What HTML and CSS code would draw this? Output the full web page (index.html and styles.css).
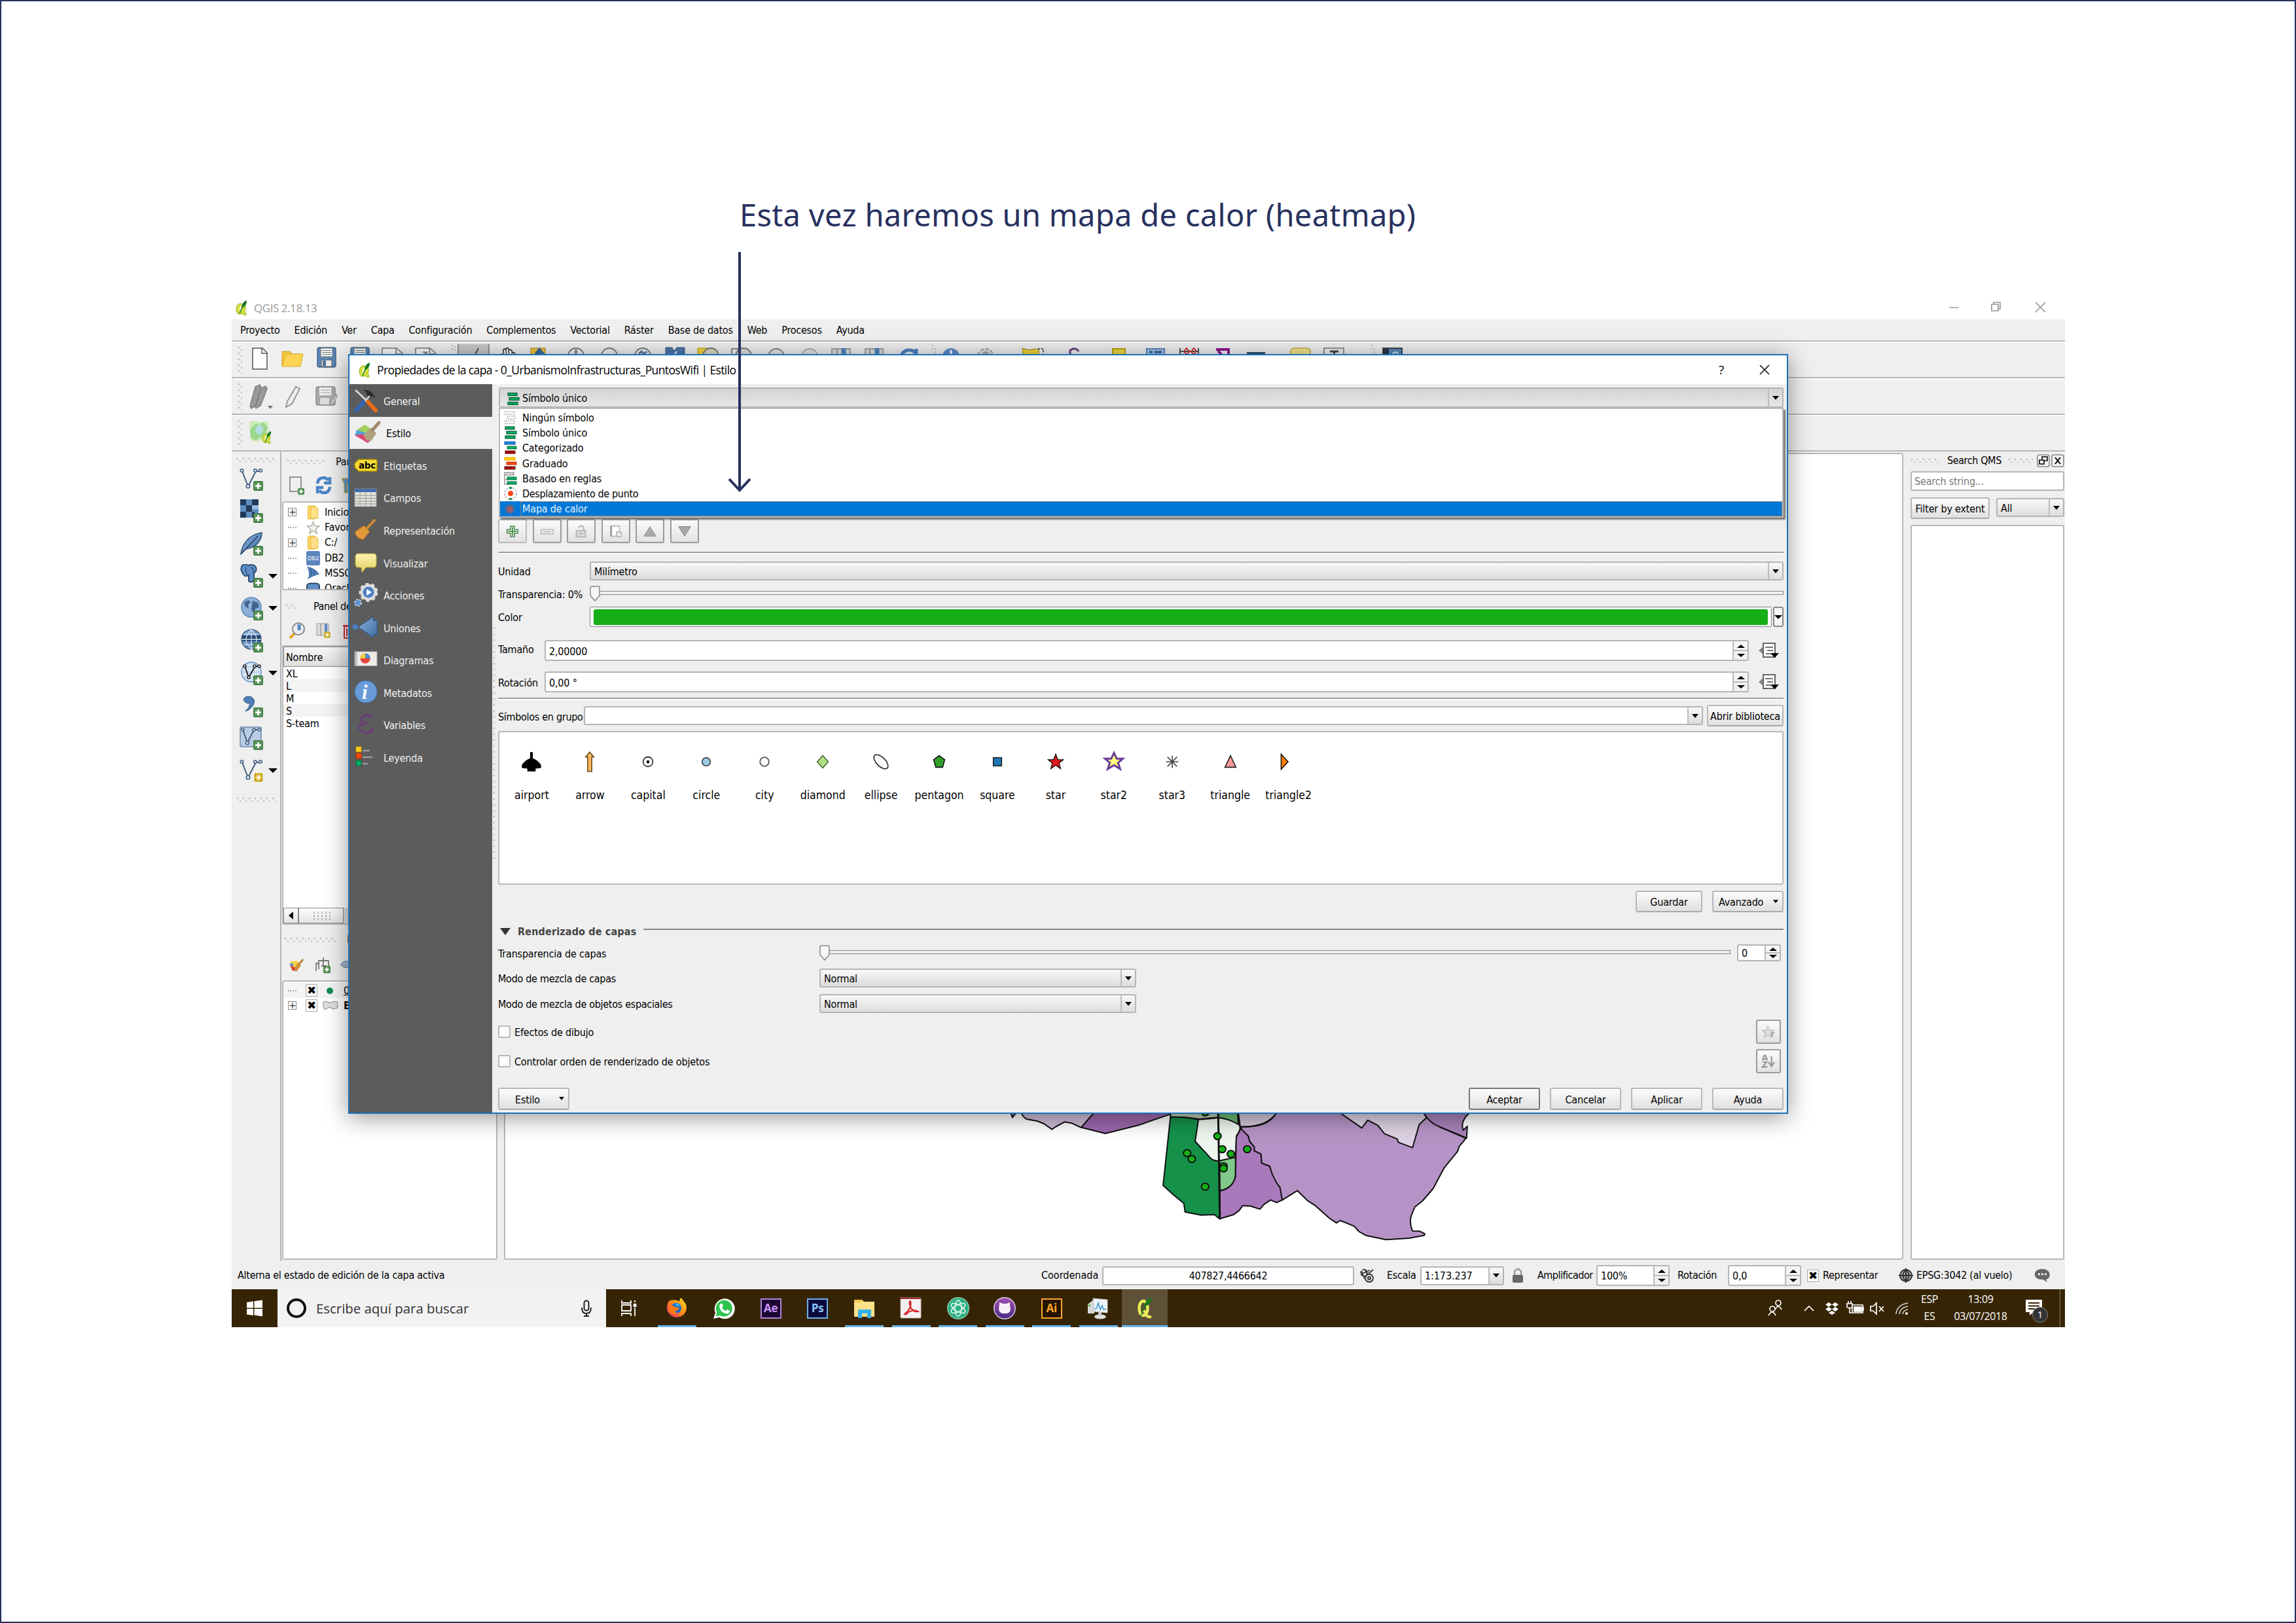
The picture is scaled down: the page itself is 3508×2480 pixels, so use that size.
FILE: index.html
```html
<!DOCTYPE html>
<html lang="es">
<head>
<meta charset="utf-8">
<title>Mapa de calor en QGIS</title>
<link rel="stylesheet" href="styles.css">
</head>
<body>
<svg class="defs" aria-hidden="true">
  <defs>
    <linearGradient id="blueG" x1="0" y1="0" x2="1" y2="1"><stop offset="0" stop-color="#8fb4dd"/><stop offset="1" stop-color="#3b68a0"/></linearGradient>
    <linearGradient id="yel" x1="0" y1="0" x2="0" y2="1"><stop offset="0" stop-color="#fff3b0"/><stop offset="1" stop-color="#e0cf60"/></linearGradient>
    <linearGradient id="ff" x1="1" y1="0" x2="0" y2="1"><stop offset="0" stop-color="#ffe226"/><stop offset=".5" stop-color="#ff8a16"/><stop offset="1" stop-color="#e31587"/></linearGradient>
    <linearGradient id="gh" x1="0" y1="0" x2="0" y2="1"><stop offset="0" stop-color="#a24fae"/><stop offset="1" stop-color="#4a2c86"/></linearGradient>
    <radialGradient id="heat"><stop offset="0" stop-color="#d8543a"/><stop offset="1" stop-color="#d8543a" stop-opacity="0"/></radialGradient>
    <symbol id="plus" viewBox="0 0 12 12"><rect x=".5" y=".5" width="11" height="11" rx="1.5" fill="#5a9458" stroke="#3d7a42"/><path d="M6 2.5v7M2.500 6h7" stroke="#fff" stroke-width="2.200"/></symbol>
    <symbol id="newbadge" viewBox="0 0 12 12"><rect x=".5" y=".5" width="11" height="11" rx="1.500" fill="#c9a20c"/><path d="M6 2v8M2 6h8M3.200 3.200l5.600 5.600M8.800 3.200L3.200 8.800" stroke="#fff6c8" stroke-width="1.300"/></symbol>
    <symbol id="vee" viewBox="0 0 36 36"><path d="M4 6l9 23L25 6h6" fill="none" stroke="#44607f" stroke-width="2"/><g fill="#dfe8f3" stroke="#44607f" stroke-width="1.500"><circle cx="3.500" cy="5" r="2.300"/><circle cx="13" cy="29" r="2.800"/><circle cx="24" cy="5" r="2.300"/><circle cx="32" cy="5" r="2.300"/></g></symbol>
    <symbol id="globe" viewBox="0 0 36 36"><circle cx="18" cy="16" r="15" fill="url(#blueG)" stroke="#44607f" stroke-width="1.500"/></symbol>
    <symbol id="qgis" viewBox="0 0 20 26"><path d="M8 6C3 7 1 12 2 18c1 5 5 6 9 4l4 3 3-2-3-4c2-4 2-9 0-11z" fill="#d3df3c" stroke="#8fae2a"/><path d="M9 9c-3 2-3 8-1 10 3-1 4-7 1-10z" fill="#f6f8d0"/><path d="M10 13c0-6 4-11 8-12 1 6-3 11-8 12z" fill="#197a22"/><path d="M12 10l-5 12" stroke="#197a22" stroke-width="1.500"/></symbol>
    <symbol id="folder" viewBox="0 0 20 24"><path d="M3 1h10v22H1V3z" fill="#ffd766" stroke="#e3b334"/><path d="M6 3h9l3 2v17H6z" fill="#ffe08a" stroke="#e3b334"/></symbol>
    <symbol id="disk" viewBox="0 0 30 32"><rect x="1" y="1" width="28" height="30" rx="3" fill="#5b86b8" stroke="#44658c" stroke-width="1.500"/><rect x="6" y="2" width="18" height="13" fill="#f4f4f4" stroke="#777"/><path d="M8 5.500h14M8 8.500h14M8 11.500h14" stroke="#777"/><rect x="7" y="20" width="16" height="10" fill="#eee" stroke="#555"/><rect x="9" y="21" width="5" height="8" fill="#4a6f9c"/></symbol>
    <symbol id="one" viewBox="0 0 20 20"><g fill="#00b060" stroke="#0a5a34" stroke-width="1.200"><rect x="2" y="1" width="14" height="4"/><rect x="4" y="8" width="15" height="4"/><rect x="2" y="15" width="15" height="4"/></g></symbol>
    <symbol id="override" viewBox="0 0 34 26"><path d="M10 6v14L2 13z" fill="#888"/><rect x="9" y="2" width="18" height="21" fill="#fff" stroke="#666" stroke-width="2"/><path d="M12 8h12M15 13h9M13 18h8" stroke="#777" stroke-width="1.800"/><path d="M20 17h13l-6.500 7z" fill="#000"/></symbol>
  </defs>
</svg>

<main class="page">
  <h1 class="caption">Esta vez haremos un mapa de calor (heatmap)</h1>

  <div class="screen">
    <header class="titlebar">
      <svg class="app-icon" viewBox="0 0 20 26"><use href="#qgis"/></svg>
      <span class="title muted">QGIS 2.18.13</span>
      <svg class="win-buttons" viewBox="0 0 190 30" fill="none" stroke="#999" stroke-width="1.700"><path d="M0 14h14M65 9h10v10H65zM68 9V6h10v10h-3M132 6l15 15M147 6l-15 15"/></svg>
    </header>
    <nav class="menu">
      <span>Proyecto</span><span>Edición</span><span>Ver</span><span>Capa</span><span>Configuración</span><span>Complementos</span><span>Vectorial</span><span>Ráster</span><span>Base de datos</span><span>Web</span><span>Procesos</span><span>Ayuda</span>
    </nav>

    <div class="toolbar tb1">
      <span class="grip vert"></span>
      <svg width="1780" height="48" viewBox="378 526 1780 48" fill="none">
        <path d="M386 532h15l7 7v25h-22z" fill="#fff" stroke="#555" stroke-width="1.500"/><path d="M400 532v8h8" stroke="#555" stroke-width="1.500"/>
        <path d="M431 559v-22h12l3 4h14v6z" fill="#f5c53a" stroke="#cf9c20"/><path d="M437 541h26l-4 19h-28z" fill="#ffd452" stroke="#d9a829"/>
        <use href="#disk" x="484" y="530" width="30" height="32"/><use href="#disk" x="535" y="530" width="30" height="32"/>
        <path d="M584 560v-28h22l9 8v20zM605 532v9h9M635 560v-28h22l9 8v20zM656 532v9h9M644 545l8-7m0 6v-6h-6" fill="#fbfbfb" stroke="#777" stroke-width="1.500"/>
        <path d="M691 527v10M695 529v10" stroke="#bbb" stroke-width="2" stroke-dasharray="2 3"/>
        <rect x="700" y="525" width="47" height="40" rx="3" fill="#c9c9c9" stroke="#909090" stroke-width="2"/><path d="M731 532l-5 10m-4 0h8" stroke="#555" stroke-width="2"/>
        <path d="M766 548l-1-6q2-3 5 2l-1-9q2-4 4 0v-2q2-3 4 0l1 2q2-2 4 1l1 3q3-1 4 2l4 9" fill="#fff" stroke="#444" stroke-width="1.800"/><path d="M773 534l1 10M777 534l1 10M782 537l1 8" stroke="#444" stroke-width="1.500"/>
        <rect x="811" y="532" width="22" height="20" fill="#f3c43a" stroke="#ac8610"/><path d="M824 552v-16m-6 6l6-8 7 8" stroke="#3568a4" stroke-width="4"/>
        <g stroke="#777" stroke-width="1.800" fill="#eee"><circle cx="880" cy="544" r="12"/><circle cx="931" cy="544" r="12"/><circle cx="982" cy="544" r="12"/></g><path d="M880 534v12M976 541l4-4 4 4 4-4" stroke="#54779e" stroke-width="3"/>
        <path d="M1017 531h10l3 6 4-6h12v20h-29z" fill="#4b77aa" stroke="#34587f"/><path d="M1028 545l6-8" stroke="#fff" stroke-width="2"/>
        <rect x="1066" y="532" width="22" height="20" fill="#efd63a" stroke="#b89b12"/><circle cx="1086" cy="544" r="12" fill="#ddd9c5" stroke="#777" stroke-width="1.800"/>
        <path d="M1118 550v-17h12" stroke="#888" stroke-width="2"/><circle cx="1136" cy="544" r="12" fill="#ddd" stroke="#777" stroke-width="1.800"/>
        <circle cx="1186" cy="545" r="12" fill="#e5e5e5" stroke="#888" stroke-width="1.800"/><circle cx="1237" cy="545" r="12" fill="#e5e5e5" stroke="#aaa" stroke-width="1.800"/>
        <path d="M1271 550v-17h28v17M1322 550v-17h27v17" fill="#ddd" stroke="#8a8a8a" stroke-width="1.500"/><path d="M1279 533v17M1329 533v17" stroke="#999" stroke-width="2"/><path d="M1289 532v18M1340 532v18" stroke="#4f83bf" stroke-width="7"/>
        <path d="M1376 546q4-12 14-11 6 0 8 5m2-7v12h-11" stroke="#4f83bf" stroke-width="5"/>
        <path d="M1425 527v10M1429 532v8" stroke="#bbb" stroke-width="2" stroke-dasharray="2 3"/>
        <circle cx="1453" cy="545" r="13" fill="#5b8cc4"/><path d="M1453 535v8" stroke="#fff" stroke-width="3"/>
        <circle cx="1506" cy="545" r="12" fill="#ddd" stroke="#999" stroke-width="2" stroke-dasharray="5 3"/><circle cx="1506" cy="543" r="6" fill="#aaa"/>
        <path d="M1562 532l10 3 8-2 7 1v16h-23z" fill="#efd63a" stroke="#8f7a12"/><path d="M1586 533h8v12" stroke="#555" stroke-width="1.800" stroke-dasharray="3 2"/>
        <path d="M1648 537q-3-5-9-4-7 3-3 9" stroke="#6a437c" stroke-width="3"/>
        <rect x="1700" y="533" width="19" height="20" fill="#ecd93c" stroke="#bda30a" stroke-width="2"/>
        <rect x="1752" y="533" width="27" height="20" fill="#a8c8ea" stroke="#5585bb" stroke-width="2"/><path d="M1756 538h5m3 0h11" stroke="#44709f" stroke-width="4"/>
        <path d="M1803 532v16m28-16v16M1803 537h28" stroke="#555" stroke-width="2"/><path d="M1813 532l4 5-4 5-4-5zM1824 532l4 5-4 5-4-5z" stroke="#cf2d2d" stroke-width="2"/>
        <path d="M1858 534h19v8M1861 536l8 9" stroke="#8d1591" stroke-width="4"/><rect x="1905" y="538" width="28" height="9" fill="#2f4d71"/>
        <rect x="1972" y="532" width="30" height="22" rx="5" fill="#f4e48c" stroke="#c4a93c" stroke-width="1.500"/>
        <rect x="2023" y="532" width="30" height="22" fill="#eee" stroke="#777" stroke-width="1.500"/><path d="M2032 537h13m-6.500 0v12" stroke="#444" stroke-width="3"/>
        <path d="M2096 527v10M2100 532v8" stroke="#bbb" stroke-width="2" stroke-dasharray="2 3"/>
        <rect x="2113" y="532" width="29" height="22" fill="#5b86b8" stroke="#222" stroke-width="1.500"/><rect x="2113" y="532" width="9" height="22" fill="#26374c"/><circle cx="2132" cy="542" r="4" stroke="#dde8f5" stroke-width="2"/>
      </svg>
    </div>
    <div class="toolbar tb2">
      <span class="grip vert"></span>
      <svg width="160" height="48" viewBox="378 581 160 48" fill="none">
        <path d="M382 620l8-30 7-3 2 4-8 28-7 4zM390 620l8-27 8-4 2 4-10 26-7 4z" fill="#999" stroke="#808080" stroke-width="1.500"/><path d="M409 619h8l-4 5z" fill="#777"/>
        <path d="M437 621l2-9 13-22 6 3-12 23z" fill="#eee" stroke="#909090" stroke-width="1.800"/>
        <rect x="483" y="590" width="29" height="28" rx="3" fill="#a9a9a9" stroke="#8b8b8b" stroke-width="1.500"/><rect x="488" y="591" width="18" height="12" fill="#eee"/><path d="M490 595h14M490 599h14" stroke="#999"/><rect x="489" y="607" width="14" height="10" fill="#ddd"/><path d="M503 619l4-8 7-10 2 2-6 12z" fill="#ccc" stroke="#888"/>
      </svg>
    </div>
    <div class="toolbar tb3">
      <span class="grip vert"></span>
      <svg width="40" height="40" viewBox="0 0 40 40"><path d="M2 3l9-2 9 3 10-3 3 32-10-3-11 3-8-3z" fill="#c9ecb4"/><path d="M3 14l9-9 5 3 5-6 8 9-3 7 4 9-10-2-9 6-8-4z" fill="#9bd88c"/><path d="M12 10l8-3 4 8-6 8-7-5z" fill="#b4dfe0"/><use href="#qgis" x="20" y="16" width="17" height="21"/></svg>
    </div>

    <section class="work">
      <aside class="side-tools">
        <span class="grip wide"></span>
        <div class="tool"><svg viewBox="0 0 36 36"><use href="#vee"/><use href="#plus" x="21" y="21" width="15" height="15"/></svg></div>
        <div class="tool"><svg viewBox="0 0 36 36"><rect x="1" width="28" height="28" fill="#5f8dc0"/><path d="M1 0h9v9H1zM19 0h10v9H19zM10 9h9v10h-9zM1 19h9v9H1zM19 19h4v9h-4z" fill="#22395a"/><path d="M19 9h10v6H19z" fill="#9cbbe0"/><use href="#plus" x="21" y="21" width="15" height="15"/></svg></div>
        <div class="tool"><svg viewBox="0 0 36 36"><path d="M2 33C4 18 14 4 34 1c0 12-8 22-24 25z" fill="url(#blueG)" stroke="#36557d" stroke-width="1.500"/><path d="M2 34L28 6" stroke="#24406a" stroke-width="1.500"/><use href="#plus" x="21" y="21" width="15" height="15"/></svg></div>
        <div class="tool"><svg viewBox="0 0 36 36"><path d="M4 2q5-3 9 0 9-3 12 3 2 5-3 9v10q-3 6-8 2v-9q-5 3-8-1-6-8-2-14z" fill="#5f8fc6" stroke="#2d4c75" stroke-width="2"/><path d="M10 5q-2 8 3 11M17 5q6 2 4 10" stroke="#2d4c75" stroke-width="1.500" fill="none"/><use href="#plus" x="21" y="21" width="15" height="15"/></svg><i class="caret"></i></div>
        <div class="tool"><svg viewBox="0 0 36 36"><circle cx="18" cy="16" r="15" fill="#8bafd8" stroke="#5e83b0" stroke-width="1.500"/><path d="M7 9l6-4 4 3-4 4 1 6-5-3zM20 6l8 3 2 7-6 2-2 7-4-6 1-6z" fill="#3d638f"/><use href="#plus" x="21" y="21" width="15" height="15"/></svg><i class="caret"></i></div>
        <div class="tool"><svg viewBox="0 0 36 36"><use href="#globe"/><path d="M4 10h28v9H4z" fill="#24466f"/><path d="M3 16h30M6 8h24M6 24h24M18 1v30M18 1q-16 15 0 30 16-15 0-30" fill="none" stroke="#cfdff0" stroke-width="1.300"/><use href="#plus" x="21" y="21" width="15" height="15"/></svg></div>
        <div class="tool"><svg viewBox="0 0 36 36"><circle cx="18" cy="16" r="15" fill="#d5e4f4" stroke="#7aa0cc" stroke-width="1.800"/><path d="M3 16h30M6 8h24M6 24h24" stroke="#9cbbdd"/><path d="M8 7l6 17L24 7h6" fill="none" stroke="#222" stroke-width="2"/><g fill="#fff" stroke="#222" stroke-width="1.500"><circle cx="8" cy="7" r="2"/><circle cx="14" cy="24" r="2"/><circle cx="23" cy="7" r="2"/><circle cx="30" cy="7" r="2"/></g><use href="#plus" x="21" y="21" width="15" height="15"/></svg><i class="caret"></i></div>
        <div class="tool"><svg viewBox="0 0 36 36"><path d="M6 8q4-6 12-3 8 5 2 14-4 6-11 8 6-6 7-12-9 0-10-7z" fill="#4e7fb6" stroke="#34587f"/><use href="#plus" x="21" y="21" width="15" height="15"/></svg></div>
        <div class="tool"><svg viewBox="0 0 36 36"><rect x="1" y="1" width="32" height="30" rx="2" fill="#b9cce4" stroke="#6d8cb0" stroke-width="1.500"/><path d="M5 5l7 20L22 5h8" fill="none" stroke="#44607f" stroke-width="2"/><g fill="#dfe8f3" stroke="#44607f" stroke-width="1.500"><circle cx="5" cy="5" r="2"/><circle cx="12" cy="25" r="2.500"/><circle cx="22" cy="5" r="2"/><circle cx="30" cy="5" r="2"/></g><use href="#plus" x="21" y="21" width="15" height="15"/></svg></div>
        <div class="tool"><svg viewBox="0 0 36 36"><use href="#vee"/><use href="#newbadge" x="22" y="22" width="14" height="14"/></svg><i class="caret"></i></div>
        <span class="grip wide low"></span>
      </aside>

      <aside class="left-docks">
        <div class="dock-head"><span class="grip d1"></span><span>Panel</span></div>
        <svg class="dock-tools" viewBox="0 0 102 36" fill="none"><path d="M12 4h17v22H12z" stroke="#777" stroke-width="1.500"/><use href="#plus" x="24" y="20" width="10" height="12"/><path d="M54 14q1-9 9-9 5 0 7 4M73 4v9h-9M73 19q-1 9-9 9-5 0-7-4M54 29v-9h9" stroke="#4a84c5" stroke-width="4.500"/><path d="M91 6h14l-5 8v14h-5V14z" fill="#6c98c9" stroke="#caa51c"/></svg>
        <div class="box tree">
          <div class="node"><i class="exp">+</i><svg class="ni" viewBox="0 0 20 24"><use href="#folder"/></svg><span>Inicio</span></div>
          <div class="node"><i class="dash"></i><svg class="ni" viewBox="0 0 22 22"><path d="M11 2l2.500 6.500 7 .5-5.500 4.500 2 7L11 16l-6 4.500 2-7L1.500 9l7-.5z" fill="#f3f3ee" stroke="#a5a596" stroke-width="1.300"/></svg><span>Favoritos</span></div>
          <div class="node"><i class="exp">+</i><svg class="ni" viewBox="0 0 20 24"><use href="#folder"/></svg><span>C:/</span></div>
          <div class="node"><i class="dash"></i><b class="ni db2">DB2</b><span>DB2</span></div>
          <div class="node"><i class="dash"></i><svg class="ni" viewBox="0 0 22 22"><path d="M1 0q15 3 20 13-8 0-19 8Q7 12 1 0z" fill="#4d7fb7"/><path d="M7 3l2 13M12 6l2 9" stroke="#2e5280"/></svg><span>MSSQL</span></div>
          <div class="node"><i class="dash"></i><svg class="ni" viewBox="0 0 22 22"><rect x="1" y="3" width="20" height="18" rx="5" fill="#5e8fc6" stroke="#243f63" stroke-width="2"/></svg><span>Oracle</span></div>
        </div>
        <div class="dock-head h2"><span class="grip d2"></span><span>Panel de</span></div>
        <svg class="dock-tools t2" viewBox="0 0 102 36" fill="none"><path d="M12 28l8-8" stroke="#e0a52c" stroke-width="4"/><circle cx="25" cy="14" r="9" fill="#e9eef5" stroke="#888" stroke-width="2"/><path d="M26 7v9" stroke="#5b8cc4" stroke-width="5"/><path d="M53 6h18v18H53z" fill="#ddd" stroke="#999"/><path d="M59 6v18" stroke="#999" stroke-width="1.500"/><path d="M67 6v12" stroke="#5b8cc4" stroke-width="4"/><use href="#newbadge" x="64" y="17" width="10" height="12"/><path d="M95 10h12v18H95zM93 9h16M99 13v12" stroke="#cf2e3a" stroke-width="2"/></svg>
        <div class="box marks">
          <div class="th">Nombre</div>
          <div class="tr">XL</div><div class="tr alt">L</div><div class="tr">M</div><div class="tr alt">S</div><div class="tr">S-team</div>
          <div class="hscroll"><span class="sb-left"></span><span class="sb-thumb"><i class="dots"></i></span></div>
        </div>
        <div class="dock-head h3"><span class="grip d3"></span><span>P</span></div>
        <svg class="dock-tools t3" viewBox="0 0 102 36" fill="none"><path d="M12 19l10 3 1 6-7-1z" fill="#d5382f"/><path d="M12 13l12-1 3 8-10 2z" fill="#f6d24a"/><path d="M12 16l6 1-1 3-5-1z" fill="#4a8fd6"/><path d="M19 23l5-8 5 4-5 7-5 1z" fill="#cf9336"/><path d="M26 17l6-7" stroke="#b88039" stroke-width="3"/><path d="M52 28v-12h4M56 25v-13h15v13M60 20h7v6M63 7v14" stroke="#777" stroke-width="1.800"/><use href="#plus" x="63" y="20" width="11" height="11"/><path d="M89 18q8-11 18 0-9 10-18 0z" fill="#9fb7d0" stroke="#6d7f92"/></svg>
        <div class="box layers">
          <div class="lrow alt"><i class="dash"></i><b class="chk">✖</b><i class="dot"></i><span class="current">0_</span></div>
          <div class="lrow"><i class="exp">+</i><b class="chk">✖</b><svg class="poly" viewBox="0 0 24 16"><path d="M1 2q5-2 10 1 6-3 12-1v9l-6 2-7-3-7 4q-3-6-2-12z" fill="#ddd" stroke="#8d8d8d"/></svg><span>B</span></div>
        </div>
      </aside>

      <div class="canvas">
        <svg class="map" viewBox="0 60 1568 600" preserveAspectRatio="none" stroke="#111" stroke-width="2" stroke-linejoin="round">
          <path vector-effect="non-scaling-stroke" d="M86 55l6 25 12-25z" fill="#a072b0"/>
          <path vector-effect="non-scaling-stroke" d="M118 55Q123 80 136 88L166 96 186 108 210 134 224 120 248 100 270 106 298 126 338 55z" fill="#cdbad6"/>
          <path vector-effect="non-scaling-stroke" d="M338 55L298 125 370 153 470 115 510 93 566 64V55z" fill="#9c68ad"/>
          <path vector-effect="non-scaling-stroke" d="M884 55Q870 95 840 111 810 125 774 123L782 145 798 165 802 189 816 215V233L836 247 838 289 862 303 870 353 878 393 888 417 900 458 945 415 975 460 1000 485 1040 540 1062 563 1074 552 1115 578 1130 603 1150 620 1210 640 1280 633 1325 620 1327 613 1312 601 1290 600Q1280 560 1286 530L1297 490 1320 462 1352 405 1385 310 1425 235 1430 212 1450 175 1372 123 1322 55z" fill="#b693c6"/>
          <path vector-effect="non-scaling-stroke" d="M768 55L774 121Q815 125 846 105 872 85 884 55z" fill="#d3c6da"/>
          <path vector-effect="non-scaling-stroke" d="M1070 55L1138 128 1156 92 1186 116 1206 154 1244 178 1248 194 1290 218 1310 112 1332 80 1322 55z" fill="#ddd2e3"/>
          <path vector-effect="non-scaling-stroke" d="M1322 55Q1340 105 1372 123L1452 174 1454 120 1442 138Q1432 100 1458 62V55z" fill="#a982b9"/>
          <path vector-effect="non-scaling-stroke" d="M565 55v22q50 0 86 10l60-8 60 35-6-59z" fill="#b6cbb2"/>
          <path vector-effect="non-scaling-stroke" d="M708 55v26q34 8 60 32l-2-58z" fill="#6cb876"/>
          <path vector-effect="non-scaling-stroke" d="M565 77Q615 77 649 89 645 149 639 189L689 269 713 279V545L697 525 657 527 609 513 605 473 573 433 543 391z" fill="#15914a"/>
          <path vector-effect="non-scaling-stroke" d="M649 89q50-4 60-9 34 6 62 34 8 16-8 50l-3 100-48 15q-14 2-25-10l-48-80z" fill="#edf5ee"/>
          <path vector-effect="non-scaling-stroke" d="M712 278l48-16v82q-5 60-47 71z" fill="#80c98a"/>
          <path vector-effect="non-scaling-stroke" d="M776 130L762 170 760 350Q752 404 713 416V544L753 526 771 506 781 484 805 486 833 500 847 476 865 458 883 470 900 458 893 400 883 380 870 340 862 303 838 289 836 247 816 233V215L802 189 798 165z" fill="#aa79bb"/>
          <path vector-effect="non-scaling-stroke" d="M708 55l5 489" fill="none" stroke-width="3"/>
          <g fill="#12b016"><ellipse vector-effect="non-scaling-stroke" cx="706" cy="165" rx="11" ry="16"/><ellipse vector-effect="non-scaling-stroke" cx="720" cy="225" rx="11" ry="16"/><ellipse vector-effect="non-scaling-stroke" cx="746" cy="247" rx="11" ry="16"/><ellipse vector-effect="non-scaling-stroke" cx="795" cy="225" rx="11" ry="16"/><ellipse vector-effect="non-scaling-stroke" cx="615" cy="243" rx="11" ry="16"/><ellipse vector-effect="non-scaling-stroke" cx="629" cy="270" rx="11" ry="16"/><ellipse vector-effect="non-scaling-stroke" cx="724" cy="303" rx="11" ry="16"/><ellipse vector-effect="non-scaling-stroke" cx="724" cy="313" rx="11" ry="16"/><ellipse vector-effect="non-scaling-stroke" cx="669" cy="397" rx="11" ry="16"/><ellipse vector-effect="non-scaling-stroke" cx="669" cy="58" rx="11" ry="14"/></g>
        </svg>
      </div>

      <aside class="qms">
        <div class="qms-head"><span class="grip q1"></span><span>Search QMS</span><span class="grip q2"></span><svg class="qbtn" viewBox="0 0 20 20" fill="none" stroke="#000" stroke-width="1.600"><rect x="1" y="1" width="18" height="18" rx="3" stroke="#888" fill="#f6f6f6"/><path d="M4 9h7v6H4zM8 8V4h8v6h-4"/></svg><svg class="qbtn" viewBox="0 0 20 20" fill="none" stroke="#000" stroke-width="2"><rect x="1" y="1" width="18" height="18" rx="3" stroke="#888" stroke-width="1.600" fill="#f6f6f6"/><path d="M6 5l8 10M14 5L6 15"/></svg></div>
        <div class="field qsearch">Search string...</div>
        <div class="qrow"><span class="btn qfilter">Filter by extent</span><span class="combo qall">All<i class="drop"></i></span></div>
        <div class="box qlist"></div>
      </aside>
    </section>

    <footer class="status">
      <span class="s-msg">Alterna el estado de edición de la capa activa</span>
      <span class="s-coord">Coordenada</span><span class="field f-coord">407827,4466642</span>
      <svg class="s-mouse" viewBox="0 0 24 24" fill="none" stroke="#333" stroke-width="1.800"><path d="M3 5l5 12M8 2l6 12M2 10l14-6M14 9l7-6"/><circle cx="7" cy="8" r="5" stroke-dasharray="3 2"/><circle cx="15" cy="16" r="6" fill="#ddd"/><circle cx="15" cy="16" r="2"/></svg>
      <span class="s-esc">Escala</span><span class="combo white f-esc">1:173.237<i class="drop"></i></span>
      <svg class="s-lock" viewBox="0 0 18 24"><path d="M4 12V6q5-8 10 0v6" fill="none" stroke="#999" stroke-width="2.500"/><rect x="1" y="11" width="16" height="12" rx="2" fill="#666"/></svg>
      <span class="s-amp">Amplificador</span><span class="spin f-amp">100%<i class="ud"></i></span>
      <span class="s-rot">Rotación</span><span class="spin f-rot">0,0<i class="ud"></i></span>
      <b class="chk s-chk">✖</b><span class="s-rep">Representar</span>
      <svg class="s-globe" viewBox="0 0 24 24" fill="none" stroke="#333" stroke-width="2"><circle cx="12" cy="12" r="9" fill="#aaa"/><path d="M12 1v22M1 12h22M12 3q-9 9 0 18 9-9 0-18"/></svg>
      <span class="s-epsg">EPSG:3042 (al vuelo)</span>
      <svg class="s-bubble" viewBox="0 0 24 22"><path d="M12 1c15 0 14 15 6 16l2 4-7-4C-3 18-3 1 12 1z" fill="#666"/><path d="M6 9h3m2 0h3m2 0h3" stroke="#fff" stroke-width="2.500"/></svg>
    </footer>

    <footer class="taskbar">
      <div class="start"><svg width="26" height="26" viewBox="0 0 26 26" fill="#fff"><path d="M1 4l10-1.500v10H1zM12.500 2.300L25 .5v12H12.500zM1 14h10v10L1 22.500zM12.500 14H25v11.500l-12.500-2z"/></svg></div>
      <div class="search"><i class="cortana"></i><span>Escribe aquí para buscar</span><svg width="18" height="26" viewBox="0 0 18 26" fill="none" stroke="#222" stroke-width="2"><rect x="5.500" y="1.500" width="7" height="15" rx="3.500"/><path d="M2 12q0 9 7 9t7-9M9 21v4M5 25h8"/></svg></div>
      <div class="tv"><svg width="26" height="26" viewBox="0 0 26 26" fill="none" stroke="#fff" stroke-width="1.800"><path d="M3 1v4h14V1M3 8h14v9H3zM3 25v-4h14v4M23 1v3M23 12v13"/><path d="M21.500 7h3v3h-3z" fill="#fff"/></svg></div>
      <div class="task on"><svg viewBox="0 0 36 36"><path d="M18 6Q10 4 5 7q-5 8-2 16 5 9 14 9 13-1 15-14 0-6-4-10-2-3-4-6-3 2-3 6z" fill="url(#ff)"/><circle cx="16" cy="18" r="8" fill="#1b6bd0"/><path d="M5 14q6-2 9 2l7 1q-1 5-6 5-1 4 5 3-10 6-16-3z" fill="#ff7a16"/><path d="M15 12l6 2" stroke="#2fb7f2" stroke-width="3"/></svg></div>
      <div class="task"><svg viewBox="0 0 36 36"><path d="M2 34l3-9A15.500 15.500 0 1 1 11 32z" fill="#fff"/><path d="M5.500 30.500l2-6A12.500 12.500 0 1 1 12 29z" fill="#2fc451"/><path d="M12 12q2-3 4 0l1 3-2 2q2 4 6 5l2-2 4 2q0 4-4 4.500-11-1-12-12z" fill="#fff"/></svg></div>
      <div class="task"><span class="adobe ae">Ae</span></div>
      <div class="task"><span class="adobe ps">Ps</span></div>
      <div class="task on"><svg viewBox="0 0 36 36"><path d="M2 5h12l3 3h16v23H2z" fill="#fde08a"/><path d="M2 5h12v4H2z" fill="#f2c94e"/><path d="M8 33V20h20v13h-6v-7h-8v7z" fill="#34b3ea"/></svg></div>
      <div class="task on"><svg viewBox="0 0 36 36"><rect x="2" y="2" width="31" height="31" rx="1" fill="#f3f1f1" stroke="#c9b3b3"/><path d="M2 4V2h31v2z" fill="#a32222"/><path d="M8 27q12-9 9-20-3 1 0 9 5 9 12 7-7-4-15 1-5 5-6 3z" fill="none" stroke="#d9242b" stroke-width="2"/></svg></div>
      <div class="task on"><svg viewBox="0 0 36 36"><circle cx="18" cy="18" r="17" fill="#8fc9ae"/><circle cx="18" cy="18" r="15.500" fill="#2bb183"/><g fill="none" stroke="#e6f7ef" stroke-width="1.500"><ellipse cx="18" cy="18" rx="5" ry="12"/><ellipse cx="18" cy="18" rx="5" ry="12" transform="rotate(60 18 18)"/><ellipse cx="18" cy="18" rx="5" ry="12" transform="rotate(-60 18 18)"/></g></svg></div>
      <div class="task on"><svg viewBox="0 0 36 36"><circle cx="18" cy="18" r="17" fill="#d9cbe2"/><circle cx="18" cy="18" r="15.500" fill="url(#gh)"/><path d="M10 12v-3l5 2h6l5-2v5q3 11-5 12h-6q-8-1-5-14z" fill="#f6f2f8"/></svg></div>
      <div class="task on"><span class="adobe ai">Ai</span></div>
      <div class="task on"><svg viewBox="0 0 36 36"><path d="M2 12l10-8v22H2z" fill="#d6d6d6"/><path d="M10 3l22 2v20l-20-2z" fill="#eef3f7" stroke="#b9c0c6"/><path d="M13 20l3-3 2-7 3 10 3-6 2 6 4-1" fill="none" stroke="#3a93d2" stroke-width="1.500"/><ellipse cx="21" cy="31" rx="9" ry="3.500" fill="#dedede"/><path d="M18 24h5v6h-5z" fill="#ccc"/><path d="M3 14h3" stroke="#52b83c" stroke-width="3"/></svg></div>
      <div class="task on active"><svg viewBox="0 0 36 36"><ellipse cx="16" cy="18" rx="6.500" ry="11" fill="none" stroke="#e8ee58" stroke-width="4.500"/><path d="M15 22q4 0 5 5t8 4" fill="none" stroke="#e8ee58" stroke-width="4"/><path d="M17 16Q18 5 28 2q1 10-11 14z" fill="#157a1c"/><path d="M19 13l-8 19" stroke="#157a1c" stroke-width="1.500"/></svg></div>
      <svg class="tray" viewBox="0 0 230 40" fill="none" stroke="#fff" stroke-width="1.700">
        <circle cx="17" cy="12" r="4"/><path d="M12 22q5-9 10 0"/><circle cx="8" cy="21" r="4"/><path d="M2 31q6-10 11 0"/>
        <path d="M57 24l7-7 7 7"/>
        <path d="M94 11l5 3.500-5 3.500-5-3.500zM104 11l5 3.500-5 3.500-5-3.500zM94 18l5 3.500-5 3.500-5-3.500zM104 18l5 3.500-5 3.500-5-3.500zM99 24l5 3-5 3-5-3z" fill="#fff" stroke="none"/>
        <path d="M130 15h16v12h-16zM147 18v6M122 13h8v5q-4 4-8 0zM124 13v-4M128 13v-4M126 20v7h4"/><path d="M133 18h11v7h-11z" fill="#fff"/>
        <path d="M158 17h4l5-5v17l-5-5h-4zM171 17l7 8M178 17l-7 8"/>
        <path d="M197 29q1-14 18-17M202 29q1-10 13-12M207 29q1-6 8-7" stroke="#ccc"/><circle cx="213" cy="28" r="2" fill="#fff" stroke="none"/>
      </svg>
      <div class="two lang"><span>ESP</span><span>ES</span></div>
      <div class="two clock"><span>13:09</span><span>03/07/2018</span></div>
      <div class="notif"><svg width="26" height="24" viewBox="0 0 26 24"><path d="M0 0h25v19H12l-6 5v-5H0z" fill="#fff"/><path d="M4 5h17M4 9.500h17M4 14h10" stroke="#362505" stroke-width="1.800"/></svg><b>1</b></div>
    </footer>

    <section class="dialog">
      <header class="dlg-title">
        <svg class="app-icon" viewBox="0 0 20 26"><use href="#qgis"/></svg>
        <span class="title">Propiedades de la capa - 0_UrbanismoInfrastructuras_PuntosWifi | Estilo</span>
        <span class="help">?</span>
        <svg class="close" viewBox="0 0 16 16" stroke="#111" stroke-width="1.600"><path d="M1 1l14 14M15 1L1 15"/></svg>
      </header>
      <div class="dlg-body">
        <nav class="tabs">
          <div class="tab"><svg viewBox="0 0 36 36"><path d="M2 2l18 17" stroke="#ddd" stroke-width="2.500"/><path d="M14 2q12-2 19 13l-5-4-4 5-4-6q0-5-6-8z" fill="#262b30"/><path d="M24 11L14 22" stroke="#ccc" stroke-width="3"/><path d="M14 21L3 33" stroke="#3567ad" stroke-width="7" stroke-linecap="round"/><path d="M21 20l12 13" stroke="#ee6d13" stroke-width="6" stroke-linecap="round"/></svg><span>General</span></div>
          <div class="tab sel"><svg viewBox="0 0 40 36"><path d="M4 14l12-8 10 6-6 8z" fill="#a6cf62"/><path d="M4 14l16 5-6 6-13-2z" fill="#4aa5dc"/><path d="M1 22l12-2 12 10-4 4z" fill="#d84a72"/><path d="M14 21l12-10 8 8-8 12-7-1z" fill="#b1a17f"/><path d="M28 14l10-11" stroke="#9d8c68" stroke-width="5" stroke-linecap="round"/></svg><span>Estilo</span></div>
          <div class="tab"><svg viewBox="0 0 36 36"><path d="M7 9h26q2 0 2 2v14q0 2-2 2H7l-6-6v-6z" fill="#f6dc31" stroke="#a98f0a" stroke-width="1.500"/><text x="7" y="23" font-size="14" font-weight="bold" font-family="DejaVu Sans Condensed, DejaVu Sans, sans-serif" textLength="26" lengthAdjust="spacingAndGlyphs">abc</text></svg><span>Etiquetas</span></div>
          <div class="tab"><svg viewBox="0 0 36 36"><rect x="1" y="5" width="33" height="27" fill="#e4e4df" stroke="#999"/><path d="M1 5h33v5H1z" fill="#3f70ad"/><path d="M1 15h33M1 19.500h33M1 24h33M1 28h33M9 10v22M18 10v22M26 10v22" stroke="#aaa89e" stroke-width="1.300"/></svg><span>Campos</span></div>
          <div class="tab"><svg viewBox="0 0 36 36"><path d="M2 20l13-9 9 9-10 13-8-3-5-7z" fill="#e09a3c" stroke="#9c6420"/><path d="M19 16L31 3" stroke="#cf8a36" stroke-width="4" stroke-linecap="round"/></svg><span>Representación</span></div>
          <div class="tab"><svg viewBox="0 0 36 36"><path d="M6 4h24q4 0 4 5v11q0 5-4 5H18l-6 8-1-8H6q-4 0-4-5V9q0-5 4-5z" fill="url(#yel)" stroke="#b9a536"/></svg><span>Visualizar</span></div>
          <div class="tab"><svg viewBox="0 0 36 36"><circle cx="22" cy="14" r="12.500" fill="#ddd" stroke="#ddd" stroke-width="4" stroke-dasharray="5 4"/><circle cx="22" cy="14" r="8.500" fill="#4a80c0"/><path d="M19 9l8 5-8 5z" fill="#fff"/><circle cx="6" cy="30" r="5" fill="#5a93d2" stroke="#ccc" stroke-width="2" stroke-dasharray="3 2"/></svg><span>Acciones</span></div>
          <div class="tab"><svg class="uni" viewBox="0 0 42 36"><circle cx="5" cy="17" r="4.500" fill="#4a7fc0"/><path d="M10 17L34 1v6h6v22h-6v5z" fill="url(#blueG)" stroke="#2c568c"/></svg><span>Uniones</span></div>
          <div class="tab"><svg viewBox="0 0 38 36"><rect x="1" y="5" width="36" height="23" fill="#ecebe6" stroke="#999"/><path d="M1 5h4v23H1z" fill="#bbb"/><circle cx="18" cy="16" r="8" fill="#e4433a"/><path d="M18 16V8q8 0 8 8z" fill="#4a89ca"/><path d="M18 16V8q-8 0-8 8z" fill="#f1cf3b"/></svg><span>Diagramas</span></div>
          <div class="tab"><svg viewBox="0 0 36 36"><circle cx="18" cy="17" r="17" fill="#699bd9" stroke="#3f70ad"/><text x="12" y="28" fill="#fff" font-size="31" font-weight="bold" font-style="italic" font-family="Liberation Serif, serif">i</text></svg><span>Metadatos</span></div>
          <div class="tab"><svg viewBox="0 0 36 36"><path d="M28 9q-2-6-11-5-8 2-6 8 2 4 8 4-9 0-11 6 0 8 10 9 9 0 11-7M20 16h2" fill="none" stroke="#6a3d79" stroke-width="3"/></svg><span>Variables</span></div>
          <div class="tab"><svg viewBox="0 0 36 36"><rect x="3" y="2" width="8" height="8" fill="#ffd21a" stroke="#c78b00"/><rect x="3" y="12" width="8" height="8" fill="#ff4a12" stroke="#a32a00"/><rect x="3" y="23" width="8" height="8" fill="#00b060" stroke="#0a6a3c"/><path d="M13 8h11M13 18h15M13 28h8" stroke="#999" stroke-width="2.500"/></svg><span>Leyenda</span></div>
        </nav>

        <div class="form">
          <div class="combo dark main-combo"><svg class="ci" viewBox="0 0 20 20"><use href="#one"/></svg>Símbolo único<i class="drop"></i></div>

          <div class="row bar">
            <span class="ib light"><svg viewBox="0 0 24 24"><path d="M9 3h6v6h6v6h-6v6H9v-6H3V9h6z" fill="#fff" stroke="#4a8a4c" stroke-width="1.800"/><path d="M12 5v14M5 12h14" stroke="#4a8a4c" stroke-width="2"/></svg></span>
            <span class="ib"><svg viewBox="0 0 24 24"><rect x="2" y="9" width="20" height="7" fill="#fff" stroke="#aaa" stroke-width="1.500"/><path d="M5 12.500h14" stroke="#aaa" stroke-width="2"/></svg></span>
            <span class="ib"><svg viewBox="0 0 24 24" fill="none" stroke="#bbb" stroke-width="2.500"><path d="M8 6q3-6 8-1v6"/><rect x="4" y="11" width="15" height="10" fill="#ddd"/><path d="M8 16h7"/></svg></span>
            <span class="ib"><svg viewBox="0 0 24 24"><path d="M4 3h14v17H4z" fill="#fff" stroke="#bbb" stroke-width="2"/><path d="M4 3v17" stroke="#999" stroke-width="3"/><rect x="13" y="13" width="8" height="8" fill="#eee" stroke="#bbb" stroke-width="2"/></svg></span>
            <span class="ib"><svg viewBox="0 0 24 24"><path d="M2 20h20L12 4z" fill="#a9a9a9" stroke="#8d8d8d"/></svg></span>
            <span class="ib"><svg viewBox="0 0 24 24"><path d="M2 4h20L12 20z" fill="#a9a9a9" stroke="#777"/></svg></span>
          </div>
          <div class="rule r1"></div>
          <div class="row unit"><label>Unidad</label><span class="combo">Milímetro<i class="drop"></i></span></div>
          <div class="row transp"><label>Transparencia: 0%</label><span class="slider"><svg width="16" height="24" viewBox="0 0 16 24"><path d="M1 3q0-2 2-2h10q2 0 2 2v12l-7 8-7-8z" fill="#f6f6f6" stroke="#888" stroke-width="1.500"/></svg><i></i></span></div>
          <div class="row color"><label>Color</label><span class="colorbox"><i></i></span><span class="colordrop"></span></div>
          <div class="row size"><label>Tamaño</label><span class="spin">2,00000<i class="ud"></i></span><svg class="ov" viewBox="0 0 34 26"><use href="#override"/></svg></div>
          <div class="row rota"><label>Rotación</label><span class="spin">0,00 °<i class="ud"></i></span><svg class="ov" viewBox="0 0 34 26"><use href="#override"/></svg></div>
          <div class="rule r2"></div>
          <div class="row group"><label>Símbolos en grupo</label><span class="combo white"><i class="drop"></i></span><span class="btn">Abrir biblioteca</span></div>
          <div class="box symbols">
            <figure><svg viewBox="-20 -20 40 40"><path d="M-2-14h4v9q8 3 12 10l0 4-8 1v4h-12v-4l-8-1 0-4q4-7 12-10z" fill="#000"/></svg><figcaption>airport</figcaption></figure>
            <figure><svg viewBox="-20 -20 40 40"><path d="M-3 14V-7h-3l6-7 6 7H3v21z" fill="#f9b65e" stroke="#6d4a1c" stroke-width="1.500"/></svg><figcaption>arrow</figcaption></figure>
            <figure><svg viewBox="-20 -20 40 40"><circle r="7" fill="#fff" stroke="#222" stroke-width="1.500"/><circle r="2.200"/></svg><figcaption>capital</figcaption></figure>
            <figure><svg viewBox="-20 -20 40 40"><circle r="6" fill="#9ccbe4" stroke="#333" stroke-width="1.500"/></svg><figcaption>circle</figcaption></figure>
            <figure><svg viewBox="-20 -20 40 40"><circle r="6.500" fill="#fff" stroke="#555" stroke-width="1.700"/></svg><figcaption>city</figcaption></figure>
            <figure><svg viewBox="-20 -20 40 40"><path d="M0-9l8 9-8 9-8-9z" fill="#b2df8a" stroke="#4d6b36" stroke-width="1.500"/></svg><figcaption>diamond</figcaption></figure>
            <figure><svg viewBox="-20 -20 40 40"><ellipse rx="13" ry="6.500" transform="rotate(45)" fill="#fff" stroke="#222" stroke-width="1.500"/></svg><figcaption>ellipse</figcaption></figure>
            <figure><svg viewBox="-20 -20 40 40"><path d="M0-9l8 6-3 11h-10L-8-3z" fill="#33a02c" stroke="#111" stroke-width="1.500"/></svg><figcaption>pentagon</figcaption></figure>
            <figure><svg viewBox="-20 -20 40 40"><rect x="-6" y="-6" width="12" height="12" fill="#1f78b4" stroke="#222" stroke-width="1.500"/></svg><figcaption>square</figcaption></figure>
            <figure><svg viewBox="-20 -20 40 40"><path d="M0-11l3 8h8l-6 5 2 8-7-5-7 5 2-8-6-5h8z" fill="#e31a1c" stroke="#111" stroke-width="1.300"/></svg><figcaption>star</figcaption></figure>
            <figure><svg viewBox="-20 -20 40 40"><path d="M0-13l4 8.500h9l-7 6 3 9-9-5.500-9 5.500 3-9-7-6h9z" fill="#ffff7a" stroke="#6a3d9a" stroke-width="2.800"/></svg><figcaption>star2</figcaption></figure>
            <figure><svg viewBox="-20 -20 40 40"><path d="M0-9V9M-9 0H9M-7-7L7 7M7-7L-7 7" stroke="#444" stroke-width="1.500"/></svg><figcaption>star3</figcaption></figure>
            <figure><svg viewBox="-20 -20 40 40"><path d="M0-9L8 8H-8z" fill="#fb9a99" stroke="#222" stroke-width="1.500"/></svg><figcaption>triangle</figcaption></figure>
            <figure><svg viewBox="-20 -20 40 40"><path d="M-11-11L-1 0-11 11z" fill="#ff7f00" stroke="#111" stroke-width="1.500"/></svg><figcaption>triangle2</figcaption></figure>
          </div>
          <div class="row save"><span class="btn b101">Guardar</span><span class="btn b109 left">Avanzado<i class="mini"></i></span></div>
          <div class="row section"><i class="tri"></i><b>Renderizado de capas</b><i class="line"></i></div>
          <div class="row tcapas"><label>Transparencia de capas</label><span class="slider"><svg width="16" height="24" viewBox="0 0 16 24"><path d="M1 3q0-2 2-2h10q2 0 2 2v12l-7 8-7-8z" fill="#f6f6f6" stroke="#888" stroke-width="1.500"/></svg><i></i></span><span class="spin">0<i class="ud"></i></span></div>
          <div class="row blend b1"><label>Modo de mezcla de capas</label><span class="combo">Normal<i class="drop"></i></span></div>
          <div class="row blend b2"><label>Modo de mezcla de objetos espaciales</label><span class="combo">Normal<i class="drop"></i></span></div>
          <div class="row check c1"><i class="cb"></i><span class="ct">Efectos de dibujo</span><span class="ib"><svg viewBox="0 0 24 24"><path d="M11 2l3 7 7 .5-5.500 4.500 2 7L11 17l-6 4 2-7L1.500 9.500l7-.5z" fill="#ddd" stroke="#aaa"/><path d="M18 20v-7h4" fill="none" stroke="#999" stroke-width="2"/></svg></span></div>
          <div class="row check c2"><i class="cb"></i><span class="ct">Controlar orden de renderizado de objetos</span><span class="ib"><svg viewBox="0 0 24 24"><path d="M2 10l3-8h2l3 8M4 8h4M2 13h7l-7 8h8M17 3v16m-5-6l5 7 5-7" fill="none" stroke="#999" stroke-width="2.500"/></svg></span></div>
          <div class="row actions"><span class="btn b109 left estilo">Estilo<i class="mini"></i></span><span class="btn b109 def">Aceptar</span><span class="btn b109">Cancelar</span><span class="btn b109">Aplicar</span><span class="btn b109">Ayuda</span></div>
          <span class="grip side"></span>

          <div class="popup">
            <div class="opt"><svg viewBox="0 0 20 20" fill="none" stroke="#aaa" stroke-width="1.500" stroke-dasharray="2 1.500"><path d="M2 1h14v4H2zM5 8h12v4H5zM2 15h14v4H2z"/></svg><span>Ningún símbolo</span></div>
            <div class="opt"><svg viewBox="0 0 20 20"><use href="#one"/></svg><span>Símbolo único</span></div>
            <div class="opt"><svg viewBox="0 0 20 20"><rect x="1" y="1" width="16" height="4" fill="#1c8fd0" stroke="#0b3fb5"/><rect x="5" y="8" width="14" height="4" fill="#00b060" stroke="#0a6a3c"/><rect x="2" y="15" width="15" height="4" fill="#a80000" stroke="#600"/></svg><span>Categorizado</span></div>
            <div class="opt"><svg viewBox="0 0 20 20"><rect x="1" y="1" width="16" height="4" fill="#ffd900" stroke="#f29b00"/><rect x="4" y="8" width="15" height="4" fill="#ff4a00" stroke="#b93200"/><rect x="1" y="15" width="16" height="4" fill="#a80000" stroke="#600"/></svg><span>Graduado</span></div>
            <div class="opt"><svg viewBox="0 0 20 20"><path d="M1 5v14h5M1 12h5" fill="none" stroke="#999" stroke-width="1.500"/><rect x="1" y="1" width="14" height="4" fill="#ddd" stroke="#777"/><rect x="5" y="8" width="14" height="4" fill="#00b060" stroke="#064"/><rect x="5" y="15" width="14" height="4" fill="#00b060" stroke="#064"/></svg><span>Basado en reglas</span></div>
            <div class="opt"><svg viewBox="0 0 20 20"><circle cx="10" cy="10" r="9" fill="none" stroke="#666" stroke-dasharray="3 2"/><circle cx="10" cy="10" r="4" fill="#ff4312"/><path d="M8 0h4v3H8zM8 17h4v3H8z" fill="#1d8a54"/></svg><span>Desplazamiento de punto</span></div>
            <div class="opt hot"><svg viewBox="0 0 20 20"><circle cx="9" cy="10" r="9" fill="url(#heat)"/></svg><span>Mapa de calor</span></div>
          </div>
        </div>
      </div>
    </section>
  </div>

  <svg class="arrow" viewBox="0 0 40 370" fill="none" stroke="#27315f" stroke-width="4"><path d="M20 0v364M4 347l16 17 16-17"/></svg>
</main>
</body>
</html>
```
FILE: styles.css
```css
* { box-sizing: border-box; }
html, body { margin: 0; }
body {
  width: 3508px; height: 2480px; overflow: hidden; background: #fff; color: #000;
  font: 16px/20px "DejaVu Sans Condensed", "DejaVu Sans", sans-serif; font-stretch: condensed; letter-spacing: -.18px;
}
svg { display: block; flex: none; }
i { font-style: normal; }
.defs { position: absolute; width: 0; height: 0; }
.page { position: relative; width: 3508px; height: 2480px; border: 2px solid #27315f; padding: 291px 351px 0 352px; }
.caption { margin: 0 0 0 776px; height: 160px; font: 400 47px/70px "Noto Sans", sans-serif; letter-spacing: .33px; color: #27315f; white-space: nowrap; }
.arrow { position: absolute; left: 1108px; top: 383px; width: 40px; height: 370px; }

.screen { position: relative; width: 2801px; height: 1575px; display: flex; flex-direction: column; background: #efefef; white-space: nowrap; overflow: hidden; }
.titlebar { height: 35px; flex: none; background: #fff; display: flex; align-items: center; padding-left: 5px; }
.app-icon { width: 20px; height: 25px; }
.title { font: 17.500px/24px "Open Sans", sans-serif; }
.titlebar .title { margin-left: 9px; font-size: 17px; letter-spacing: -.45px; }
.muted { color: #999; }
.win-buttons { width: 190px; height: 30px; margin-left: auto; margin-right: -13px; }
.menu { height: 34px; flex: none; display: flex; gap: 22px; padding: 7px 0 0 13px; border-bottom: 2px solid #b8b8b8; letter-spacing: -.24px; }

.toolbar { flex: none; display: flex; align-items: center; border-top: 2px solid #fafafa; border-bottom: 2px solid #b8b8b8; padding-left: 9px; }
.tb1, .tb2, .tb3 { height: 56px; }
.grip {
  flex: none; display: block;
  background: radial-gradient(circle at 2px 2px, #bdbdbd 1.200px, transparent 1.700px) 0 0 / 9px 9px,
              radial-gradient(circle at 2px 2px, #c8c8c8 1.200px, transparent 1.700px) 4px 4px / 9px 9px;
}
.grip.vert { width: 8px; height: 42px; margin-right: 7px; }
.tb3 svg { margin-left: 1px; }

.work { height: 1237px; flex: none; display: flex; }
.side-tools { width: 76px; flex: none; border-right: 2px solid #b5b5b5; display: flex; flex-direction: column; }
.grip.wide { width: 60px; height: 9px; margin: 9px 0 -1px 7px; }
.grip.wide.low { margin-top: 16px; }
.tool { height: 49.500px; flex: none; display: flex; align-items: center; padding-left: 12px; }
.tool svg { width: 36px; height: 36px; }
.caret { width: 0; height: 0; border: 7px solid transparent; border-top-color: #000; border-bottom: 0; margin-left: 8px; }

.box { background: #fff; border: 2px solid #b8b8b8; border-radius: 3px; }
.left-docks { width: 331px; flex: none; padding-left: 1px; display: flex; flex-direction: column; }
.dock-head { height: 32px; flex: none; display: flex; align-items: center; }
.dock-head .grip { height: 8px; }
.d1 { width: 58px; margin: 0 17px 0 7px; }
.d2 { width: 18px; margin: 0 25px 0 5px; }
.d3 { width: 80px; margin: 0 16px 0 3px; }
.h2 { margin-top: 9px; letter-spacing: -.4px; } .h3 { margin-top: 7px; }
.dock-tools { width: 102px; height: 36px; flex: none; margin-top: 3px; }
.t2 { margin-top: 2px; height: 40px; } .t3 { margin-top: 4px; }
.tree { height: 136px; flex: none; margin-top: 5px; overflow: hidden; padding-top: 3px; }
.node { height: 23.300px; display: flex; align-items: center; padding-left: 7px; }
.node span { margin-left: 7px; }
.exp { width: 13px; height: 13px; border: 1.500px solid #888; font: 14px/11px "DejaVu Sans", sans-serif; text-align: center; background: #fff; color: #333; flex: none; }
.dash { width: 13px; height: 1px; border-top: 2px dotted #aaa; flex: none; }
.node .ni { width: 21px; height: 22px; margin-left: 15px; }
.db2 { background: #5b86bd; color: #fff; border-radius: 3px; font: 9px/22px "Liberation Sans", sans-serif; text-align: center; }
.marks { height: 427px; flex: none; margin-top: 1px; display: flex; flex-direction: column; }
.th { height: 31px; flex: none; padding: 6px 3px 4px; background: linear-gradient(#f8f8f8, #dedede); border: 1.500px solid #888; }
.tr { height: 19px; flex: none; padding-left: 4px; line-height: 21px; }
.alt { background: #f4f4f4; }
.hscroll { margin-top: auto; height: 24px; display: flex; background: #ddd; }
.sb-left, .sb-thumb { border: 1.500px solid #888; background: linear-gradient(#fdfdfd, #e4e4e4); display: flex; align-items: center; justify-content: center; }
.sb-left { width: 23px; } .sb-thumb { width: 69px; }
.sb-left::before { content: ""; border: 6px solid transparent; border-right: 7px solid #000; border-left: 0; }
.dots { width: 28px; height: 15px; background: radial-gradient(circle, #bbb 1.200px, transparent 1.600px) 0 0 / 6px 5px; }
.layers { flex: 1; margin: 6px 1px 2px 0; padding-top: 2px; }
.lrow { height: 23px; display: flex; align-items: center; padding-left: 7px; font-weight: bold; }
.chk { width: 18px; height: 19px; background: #fff; border: 1.500px solid #aaa; font: 17px/16px "DejaVu Sans", sans-serif; text-align: center; flex: none; margin-left: 14px; }
.dot { width: 10px; height: 10px; border-radius: 50%; background: #118a50; margin: 0 16px 0 14px; flex: none; }
.poly { width: 24px; height: 16px; margin: 0 8px; }
.current { text-decoration: underline; font-weight: normal; }

.canvas { width: 2138px; flex: none; margin: 2px 0 2px 9px; background: #fff; border: 2px solid #b8b8b8; border-radius: 3px; padding: 1007px 0 0 728px; }
.map { width: 800px; height: 200px; }

.qms { width: 235px; margin-left: 11px; padding-top: 4px; display: flex; flex-direction: column; }
.qms-head { height: 20px; display: flex; align-items: center; letter-spacing: -.4px; }
.qms-head .grip { height: 8px; width: 43px; }
.qms-head .q1 { margin-right: 13px; } .qms-head .q2 { margin-left: 10px; width: 38px; }
.qbtn { width: 20px; height: 20px; margin-left: auto; } .qbtn + .qbtn { margin-left: 2px; }
.field, .spin, .combo, .btn { border: 2px solid #b5b5b5; border-radius: 3px; background: #fff; display: flex; align-items: center; padding-top: 2px; }
.qsearch { height: 30px; margin-top: 6px; padding-left: 4px; color: #777; }
.qrow { display: flex; justify-content: space-between; margin-top: 10px; height: 33px; align-items: flex-start; }
.btn { justify-content: center; background: linear-gradient(#fcfcfc, #e0e0e0); border-color: #b8b8b8; border-bottom-color: #a9a9a9; padding-top: 3px; }
.qfilter { width: 121px; height: 33px; }
.qall { width: 104px; height: 29px; margin-top: 1px; }
.qlist { flex: 1; margin: 9px 0 2px; }

.combo { background: linear-gradient(#f9f9f9, #dcdcdc); padding-left: 5px; }
.combo.white { background: #fff; }
.combo.dark { background: linear-gradient(#d3d3d3, #e7e7e7); }
.drop { margin: -2px 0 0 auto; align-self: stretch; width: 22px; border-left: 2px solid #bbb; display: flex; align-items: center; justify-content: center; }
.white .drop { background: linear-gradient(#f9f9f9, #dcdcdc); }
.drop::after { content: ""; border: 5.500px solid transparent; border-top: 6px solid #000; border-bottom: 0; }
.spin { padding-left: 5px; }
.ud { margin: -2px 0 0 auto; align-self: stretch; width: 23px; border-left: 2px solid #bbb; display: flex; flex-direction: column; justify-content: space-around; align-items: center; background: linear-gradient(#f4f4f4 46%, #bbb 46%, #bbb 54%, #f0f0f0 54%); }
.ud::before { content: ""; border: 6px solid transparent; border-bottom: 5px solid #000; border-top: 0; }
.ud::after { content: ""; border: 6px solid transparent; border-top: 5px solid #000; border-bottom: 0; }

.status { height: 43px; flex: none; display: flex; align-items: center; padding: 1px 0 0 9px; letter-spacing: -.28px; }
.s-msg { width: 1228px; } .s-coord { width: 93px; letter-spacing: 0; }
.f-coord { width: 385px; height: 29px; justify-content: center; }
.s-mouse { width: 24px; height: 24px; margin: 0 18px 0 8px; }
.s-esc { width: 51px; } .f-esc { width: 128px; height: 29px; letter-spacing: -.1px; }
.s-lock { width: 18px; height: 24px; margin: 0 21px 0 12px; }
.s-amp { width: 90px; letter-spacing: -.5px; } .f-amp { width: 112px; height: 32px; }
.s-rot { width: 77px; padding-left: 12px; margin-right: 12px; } .f-rot { width: 112px; height: 32px; }
.s-chk { margin-left: 9px; } .s-rep { margin-left: 6px; width: 115px; }
.s-globe { width: 24px; height: 24px; } .s-epsg { margin-left: 4px; width: 180px; }
.s-bubble { width: 24px; height: 22px; }

.taskbar { height: 58px; flex: none; background: #362505; display: flex; font-family: "Open Sans", sans-serif; font-stretch: normal; color: #fff; }
.start { width: 70px; display: flex; align-items: center; padding-left: 22px; }
.search { width: 502px; background: #f2f2f2; color: #333; display: flex; align-items: center; padding: 0 21px 0 14px; font-size: 20.500px; line-height: 30px; letter-spacing: -.05px; }
.cortana { width: 30px; height: 30px; border: 4px solid #111; border-radius: 50%; margin-right: 15px; }
.search svg { margin-left: auto; }
.tv { width: 73px; display: flex; align-items: center; padding-left: 21px; }
.task { width: 71.500px; flex: none; display: flex; align-items: center; justify-content: center; }
.task svg { width: 36px; height: 36px; }
.task.on { background: linear-gradient(#69b6ee, #69b6ee) center bottom / 59px 3px no-repeat; }
.task.active { background: linear-gradient(#69b6ee, #69b6ee) center bottom / 100% 3px no-repeat #5f5038; width: 70px; }
.adobe { width: 32px; height: 31px; border: 2.500px solid; font: bold 17px/25px "Open Sans", sans-serif; text-align: center; }
.ae { background: #1a0733; color: #cf96fd; border-color: #b183e0; }
.ps { background: #0c0a3c; color: #8cc6ff; border-color: #6fb1ee; }
.ai { background: #271400; color: #ffa62b; border-color: #ffa62b; }
.tray { width: 230px; height: 40px; margin: 9px 0 0 auto; }
.two { display: flex; flex-direction: column; align-items: center; font-size: 16px; line-height: 26px; padding-top: 2px; letter-spacing: -.4px; }
.lang { width: 36px; }
.clock { width: 100px; margin-left: 10px; }
.notif { width: 79px; position: relative; padding: 16px 0 0 19px; }
.notif b { position: absolute; left: 29px; top: 27px; width: 24px; height: 24px; border-radius: 50%; background: #333; border: 1.500px solid #888; font: 15px/21px "Open Sans", sans-serif; text-align: center; }
.notif::after { content: ""; position: absolute; right: 7px; top: 0; width: 1px; height: 58px; background: #8a7f6b; }

.dialog { position: absolute; left: 178px; top: 88px; width: 2200px; height: 1161px; border: 2px solid #1a72bb; background: #efefef; box-shadow: 0 5px 34px rgba(0, 0, 0, .42); display: flex; flex-direction: column; }
.dlg-title { height: 44px; flex: none; background: #fff; display: flex; align-items: center; padding-left: 13px; }
.dlg-title .title { margin-left: 9px; letter-spacing: -.61px; }
.help { margin-left: auto; width: 12px; font: 19px/24px "Open Sans", sans-serif; }
.close { width: 16px; height: 16px; margin: 0 26px 0 50px; }
.dlg-body { flex: 1; display: flex; min-height: 0; }
.tabs { width: 218px; flex: none; background: #5c5c5c; color: #f0f0f0; }
.tab { height: 49.550px; display: flex; align-items: center; padding-left: 7px; }
.tab svg { width: 36px; height: 36px; margin: 0 9px 0 0; }
.tab svg.uni { width: 40px; margin-left: -3px; margin-right: 8px; }
.tab span { padding-top: 4px; }
.sel { background: #efefef; color: #000; }
.tab.sel svg { width: 40px; }

.form { position: relative; flex: 1; padding: 5px 5px 0 9px; display: flex; flex-direction: column; }
.form > * { flex: none; }
.form label, .ct { padding-top: 3px; }
.row { display: flex; align-items: center; }
.row .combo, .row .spin, .row .btn { height: 100%; }
.main-combo { height: 31px; padding-left: 10px; margin-left: 1px; padding-top: 3px; }
.main-combo .drop { margin-top: -3px; }
.ci { width: 20px; height: 21px; margin-right: 4px; }
.bar { margin-top: 170px; height: 37px; gap: 8.500px; }
.ib { width: 44px; height: 37px; border: 2px solid #9a9a9a; border-radius: 3px; background: linear-gradient(#fbfbfb, #e2e2e2); display: flex; align-items: center; justify-content: center; }
.ib.light { border-color: #bbb; }
.ib svg { width: 24px; height: 22px; }
.rule { height: 4px; border-top: 2px solid #a0a0a0; border-bottom: 2px solid #fcfcfc; }
.r1 { margin-top: 13px; } .r2 { margin-top: 8px; }
.unit { margin-top: 11px; height: 29px; }
.unit label, .transp label, .color label { width: 140px; }
.unit .combo { flex: 1; }
.transp { margin-top: 8px; height: 24px; }
.slider { flex: 1; display: flex; align-items: center; }
.slider i { flex: 1; height: 6px; border: 1.500px solid #888; border-left: 0; margin-top: -2px; }
.color { margin-top: 8px; height: 31px; }
.colorbox { flex: 1; height: 31px; border: 1.500px solid #888; border-radius: 3px; padding: 3px 5px; background: #f7f7f7; }
.colorbox i { display: block; height: 24px; border-radius: 3px; background: #16af18; }
.colordrop { width: 16px; height: 31px; margin-left: 2px; border: 2px solid #888; border-radius: 3px; background: #f7f7f7; display: flex; align-items: center; justify-content: center; }
.colordrop::after { content: ""; border: 6px solid transparent; border-top: 6px solid #000; border-bottom: 0; }
.size { margin-top: 20px; height: 32px; } .rota { margin-top: 16px; height: 32px; }
.form .size label { padding: 0 0 3px; }
.size label, .rota label { width: 71px; }
.size .spin, .rota .spin { flex: 1; padding-top: 3px; }
.size .ud, .rota .ud { margin-top: -3px; }
.ov { width: 34px; height: 26px; margin: 0 6px 0 13px; }
.group { margin-top: 7px; height: 33px; }
.form .group label { width: 131px; padding-top: 5px; letter-spacing: -.3px; }
.group .combo { flex: 1; height: 29px; }
.group .btn { width: 117px; margin-left: 6px; }
.symbols { margin-top: 7px; height: 235px; display: flex; padding: 24px 0 0 5px; }
.symbols figure { margin: 0; width: 88.950px; display: flex; flex-direction: column; align-items: center; font-size: 17.500px; letter-spacing: 0; }
.symbols svg { width: 42px; height: 42px; }
.symbols figcaption { margin-top: 20px; }
.save { margin-top: 9px; height: 33px; justify-content: flex-end; gap: 15px; }
.b101 { width: 102px; } .b109 { width: 109px; }
.left { justify-content: flex-start; padding-left: 8px; }
.mini { margin-left: auto; margin-right: 6px; margin-bottom: 4px; border: 4px solid transparent; border-top: 5px solid #000; border-bottom: 0; }
.section { margin-top: 18px; height: 22px; color: #444; }
.tri { border: 8px solid transparent; border-top: 11px solid #333; border-bottom: 0; margin: 0 11px 0 3px; }
.line { flex: 1; height: 2px; background: #888; margin: 0 0 7px 11px; }
.section b { letter-spacing: .15px; padding-top: 2px; }
.tcapas { margin-top: 9px; height: 26px; }
.tcapas label, .blend label { width: 491px; }
.tcapas .spin { width: 67px; margin: 0 4px 0 10px; }
.blend { height: 29px; letter-spacing: -.3px; }
.blend .combo { width: 484px; letter-spacing: -.2px; }
.b1 { margin-top: 11px; } .b2 { margin-top: 10px; }
.check { height: 37px; }
.c1 { margin-top: 10px; } .c2 { margin-top: 8px; }
.cb { width: 19px; height: 19px; border: 2px solid #b8b8b8; border-radius: 2px; background: #fbfbfb; margin-right: 6px; }
.check .ib { margin-left: auto; margin-right: 4px; width: 38px; }
.actions { margin-top: 22px; height: 34px; gap: 15px; }
.row .estilo { margin-right: auto; padding-left: 24px; }
.def { border-color: #777; }
.grip.side { position: absolute; left: 1px; top: 371px; width: 5px; height: 360px; }

.popup { position: absolute; left: 10px; top: 36px; width: 1963px; height: 168px; background: #fff; border: 2px solid #bbb; box-shadow: 3px 3px 2px #777; padding-top: 1px; }
.opt { height: 23.350px; display: flex; align-items: center; padding-left: 6px; }
.opt svg { width: 20px; height: 20px; margin-right: 5px; }
.opt span { flex: 1; align-self: stretch; display: flex; align-items: center; padding: 2px 0 0 3px; }
.opt:nth-child(6) span { letter-spacing: -.35px; }
.hot { background: #0078d7; color: #e8f2fb; }
.opt.hot span { border: 1.500px dotted #e0812a; padding: 1px 0 0 2px; }
```
